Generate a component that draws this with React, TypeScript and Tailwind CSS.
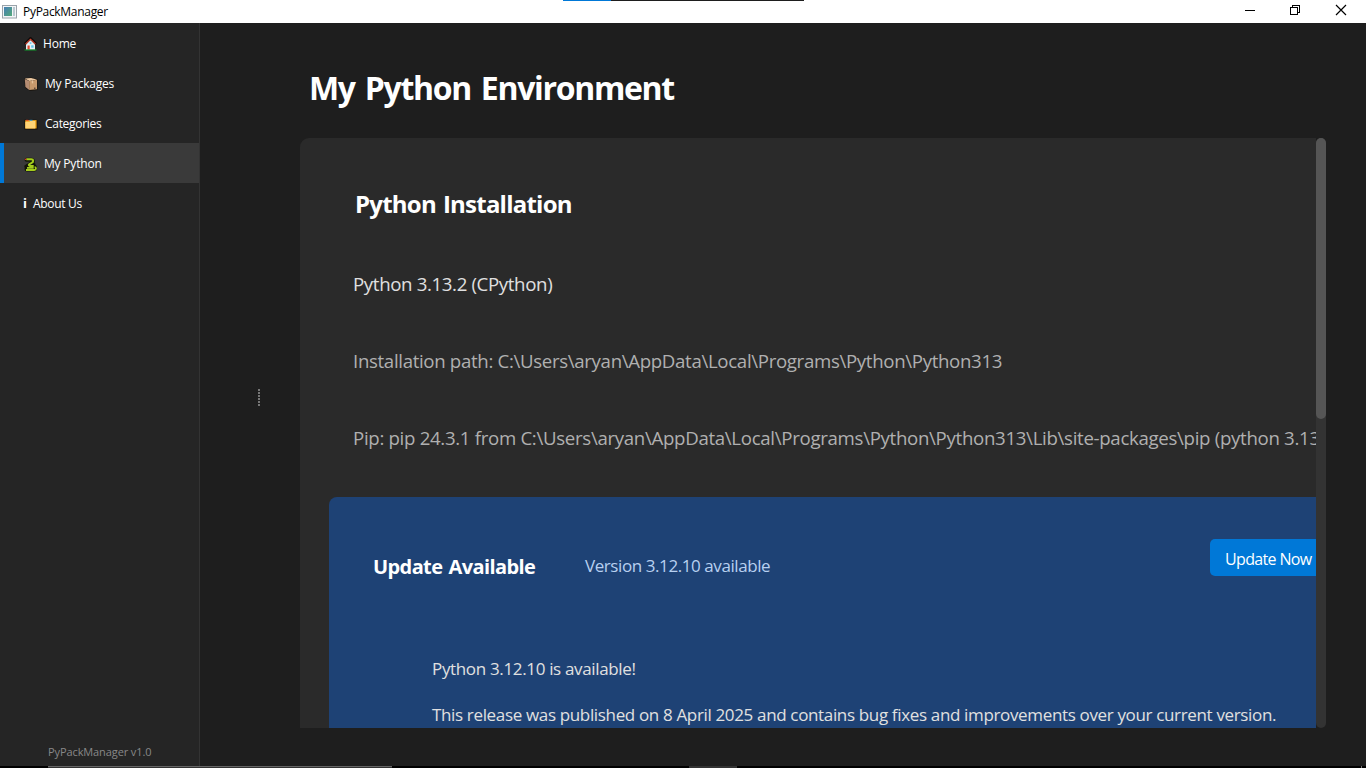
import type { ReactNode } from 'react';

const HouseIcon = () => (
  <svg width="13" height="14" viewBox="0 0 13 14">
    <path d="M2 6.5 6.5 2 11 6.5V13H2Z" fill="#e4eef2" />
    <path d="M.8 7 6.5 1.3 12.2 7" fill="none" stroke="#120b0a" strokeWidth="2.6" />
    <path d="M1.5 7.2 6.5 2.2 11.5 7.2" fill="none" stroke="#d8452f" strokeWidth="1.1" />
    <path d="M2.6 7.6 6.5 3.7l3.900 3.900V12.500H2.600Z" fill="#e9f1f4" />
    <rect x="3.500" y="8.500" width="2.200" height="4" fill="#e2492f" />
    <rect x="7.200" y="8.300" width="2.400" height="2.400" fill="#62c6ef" />
    <rect x="5.700" y="5.300" width="1.700" height="1.600" fill="#62c6ef" />
    <path d="M.5 13h12" stroke="#15812a" strokeWidth="1.300" />
  </svg>
);

const BoxIcon = () => (
  <svg width="14" height="14" viewBox="0 0 14 14">
    <path d="M.5 1.500 7 .4 13.500 2.300V13L6 13.700 1 10.800Z" fill="#161009" />
    <path d="M.8 1.600 7 1 13 2.500 5.500 4Z" fill="#edc9a2" />
    <path d="M.8 2 5.200 4V13L1.400 10Z" fill="#b58c72" />
    <path d="M5.200 4 13 2.800V12.200L5.200 13Z" fill="#c8996c" />
    <path d="M8.500 3.400v3" stroke="#e6c29a" strokeWidth="1.400" />
    <path d="M10 11.200h1.500" stroke="#352820" />
  </svg>
);

const FolderIcon = () => (
  <svg width="14" height="11" viewBox="0 0 14 11">
    <path d="M.5 .8h12l1 1v8.700H.5Z" fill="#120d06" />
    <path d="M1.300 1.100h11.300v8.400H1.300Z" fill="#f2a71c" />
    <path d="M2 1.300h2.500" stroke="#e8412f" />
    <path d="M5.500 1.300h3" stroke="#2f99df" />
    <path d="M1.300 2.700h4.200l.8-.7h4.900v7.500H1.300Z" fill="#ffd476" />
  </svg>
);

const SnakeIcon = () => (
  <svg width="13" height="15" viewBox="0 0 13 15">
    <path d="M2.500 2.800h4.700c2.200 0 2.200 3 0 3.500L5.500 7.500h4" fill="none" stroke="#121608" strokeWidth="4" strokeLinecap="round" />
    <rect x=".6" y="7.500" width="12.200" height="7" rx="2.500" fill="#121608" />
    <path d="M2.300 2.200h5c2.400 0 2.300 2.900.4 3.600L5.500 7.100c-1.300 1-.3 1.900 1 1.800h3.200" fill="none" stroke="#a4cc1c" strokeWidth="2" />
    <path d="M3 10.800h6.700M2 13h8.300c2.200 0 2-2.800.3-2.800" fill="none" stroke="#a4cc1c" strokeWidth="1.800" />
    <path d="M.8 2.300h1.700" stroke="#e3402e" strokeWidth="1.200" />
  </svg>
);

function NavItem({ icon, label, active = false }: { icon: ReactNode; label: ReactNode; active?: boolean }) {
  return (
    <div className={`flex h-10 items-center border-l-4 pl-5 pt-[2px] text-[12px] text-white ${active ? 'border-[#0078d7] bg-[#3a3a3a]' : 'border-transparent'}`}>
      {icon}
      {label}
    </div>
  );
}

export default function App() {
  return (
    <div className="flex h-screen w-screen flex-col overflow-hidden whitespace-nowrap bg-[#1e1e1e] font-['Open_Sans','Noto_Sans',sans-serif]">
      <header className="relative flex h-[23px] shrink-0 items-center bg-white text-black">
        <div className="absolute left-[563px] top-0 flex h-px w-[241px] bg-[#1e1e1e]">
          <div className="w-12 bg-[#0078d7]" />
        </div>
        <svg className="ml-[2px]" width="15" height="14" viewBox="0 0 15 14">
          <rect x=".5" y=".5" width="14" height="12.500" fill="#f3f5f7" stroke="#9aa3aa" />
          <defs>
            <linearGradient id="pane" x2="1" y2="1">
              <stop stopColor="#477eb5" />
              <stop offset="1" stopColor="#53aa79" />
            </linearGradient>
          </defs>
          <rect x="2" y="2" width="8" height="9" fill="url(#pane)" />
          <rect x="11" y="2" width="2" height="9" fill="#b9c9d0" />
        </svg>
        <span className="ml-[6px] flex-1 text-[12px] leading-[23px] tracking-[-0.3px]">PyPackManager</span>
        <svg width="121" height="23" viewBox="0 0 121 23" fill="none" stroke="#000" shapeRendering="crispEdges">
          <path d="M0 10.500h10" />
          <path d="M45.500 7.500h7v7h-7zM47.500 7V5.500h7v7H53" />
          <path d="m91 5 10 10M101 5l-10 10" strokeWidth="1.200" shapeRendering="auto" />
        </svg>
      </header>

      <div className="flex h-[743px] shrink-0">
        <aside className="flex w-[200px] shrink-0 flex-col border-r border-[#333333] bg-[#252525]">
          <nav className="flex-1">
            <NavItem icon={<HouseIcon />} label={<span className="ml-[6px] tracking-[-0.2px]">Home</span>} />
            <NavItem icon={<BoxIcon />} label={<span className="ml-[7px] tracking-[-0.22px]">My Packages</span>} />
            <NavItem icon={<FolderIcon />} label={<span className="ml-[7px] tracking-[-0.3px]">Categories</span>} />
            <NavItem active icon={<SnakeIcon />} label={<span className="ml-[7px] tracking-[-0.2px]">My Python</span>} />
            <NavItem icon={<span className="-ml-px text-[13px] font-bold">i</span>} label={<span className="ml-[6px] tracking-[-0.3px]">About Us</span>} />
          </nav>
          <div className="h-[29px] pl-12 text-[11px] leading-[30px] tracking-[-0.1px] text-[#888888]">PyPackManager v1.0</div>
        </aside>

        <div className="flex w-[100px] shrink-0 flex-col items-center pl-[18px] pt-[366px]">
          <div className="flex flex-col gap-px">
            {[0, 1, 2, 3, 4, 5].map((n) => (
              <div key={n} className="h-[2px] w-[2px] bg-[#777777]" />
            ))}
          </div>
        </div>

        <main className="flex w-[1066px] flex-col">
          <h1 className="h-[115px] pl-[9px] text-[32px] font-bold leading-[129px] tracking-[-1.32px] text-white [word-spacing:3px]">My Python Environment</h1>
          <div className="flex h-[590px] w-[1026px]">
            <section className="flex w-[1016px] flex-col overflow-hidden rounded-tl-[9px] bg-[#2a2a2a] pl-[29px]">
              <h2 className="h-[108px] shrink-0 pl-[26px] text-[24px] font-bold leading-[132px] tracking-[-0.77px] text-white [word-spacing:1.5px]">Python Installation</h2>
              <p className="h-[77px] shrink-0 pl-6 text-[18.670px] leading-[75px] tracking-[-0.360px] text-[#e0e0e0]">Python 3.13.2 (CPython)</p>
              <p className="h-[77px] shrink-0 pl-6 text-[18.670px] leading-[75px] tracking-[-0.335px] text-[#b0b0b0]">{'Installation path: C:\\Users\\aryan\\AppData\\Local\\Programs\\Python\\Python313'}</p>
              <p className="h-[77px] shrink-0 pl-6 text-[18.670px] leading-[75px] tracking-[-0.315px] text-[#b0b0b0]">{'Pip: pip 24.3.1 from C:\\Users\\aryan\\AppData\\Local\\Programs\\Python\\Python313\\Lib\\site-packages\\pip (python 3.13)'}</p>
              <div className="mt-5 h-[400px] w-[1060px] shrink-0 rounded-lg bg-[#1e4275]">
                <div className="flex h-[149px] pl-11">
                  <h3 className="w-[212px] text-[20px] font-bold leading-[139px] tracking-[-0.6px] text-white [word-spacing:1.5px]">Update Available</h3>
                  <span className="w-[625px] text-[17px] leading-[138px] tracking-[-0.420px] text-[#b8d0f0]">Version 3.12.10 available</span>
                  <button className="mt-[42px] h-[37px] w-[120px] rounded-[5px] bg-[#0078d7] pl-[15px] pt-[2px] text-left text-[16px] tracking-[-0.65px] text-white">Update Now</button>
                </div>
                <div className="pl-[103px] text-[17px] text-[#e0e0e0]">
                  <p className="h-[46px] leading-[46px] tracking-[-0.340px]">Python 3.12.10 is available!</p>
                  <p className="h-[46px] leading-[46px] tracking-[-0.345px]">This release was published on 8 April 2025 and contains bug fixes and improvements over your current version.</p>
                </div>
              </div>
            </section>
            <div className="w-[10px] rounded-[5px] bg-[#333333]">
              <div className="h-[281px] rounded-[5px] bg-[#555555]" />
            </div>
          </div>
        </main>
      </div>
      <footer className="flex h-[2px] shrink-0 bg-black">
        <div className="ml-12 w-[344px] border-t border-[#666666] bg-[#333333]" />
        <div className="ml-[297px] w-12 bg-[#333333]" />
        <div className="ml-[624px] w-px bg-[#777777]" />
      </footer>
    </div>
  );
}
